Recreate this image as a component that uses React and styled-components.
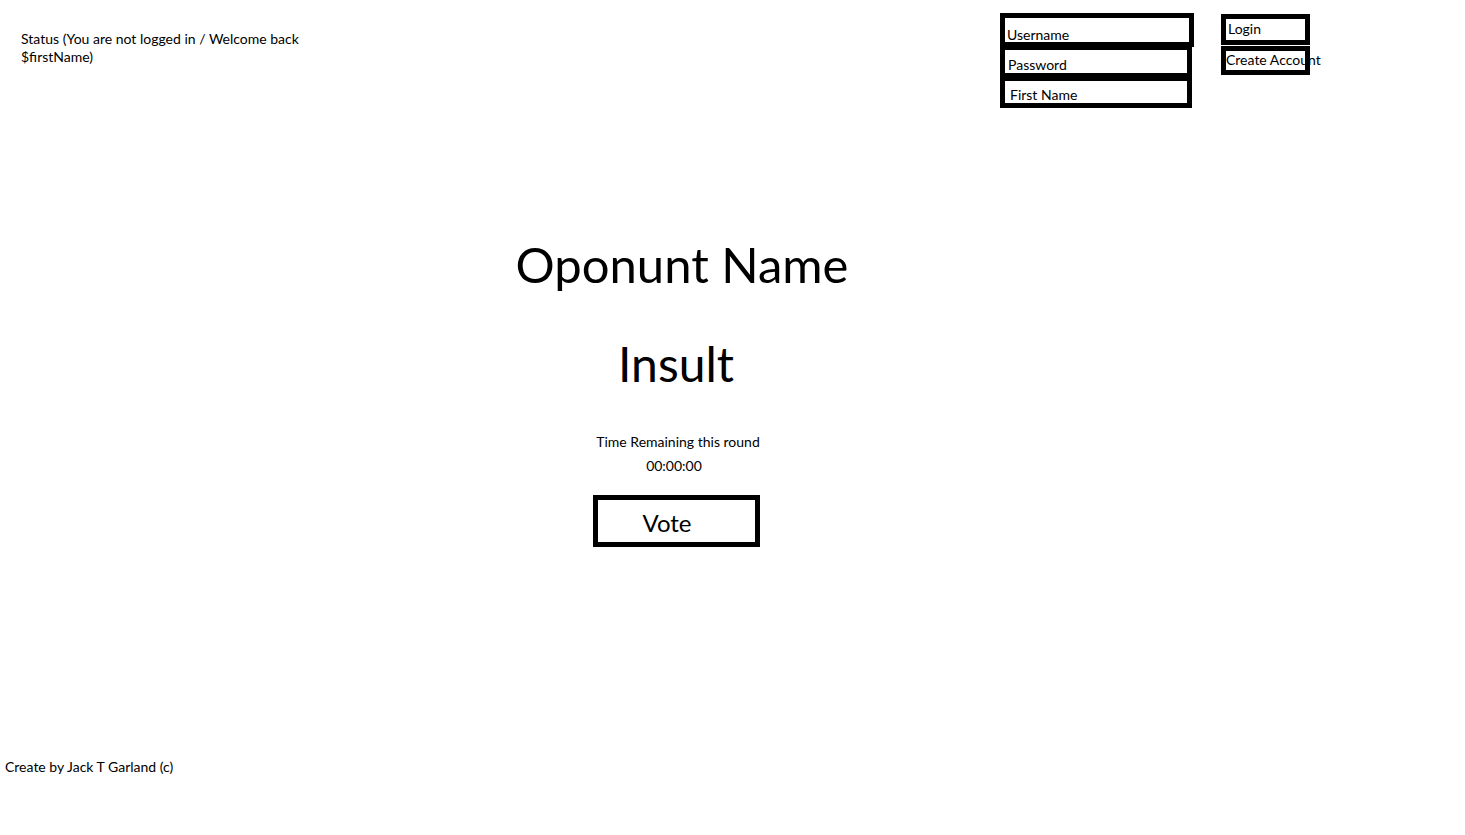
import React from 'react';
import styled, { createGlobalStyle } from 'styled-components';

const GlobalStyle = createGlobalStyle`
  html, body {
    margin: 0;
    padding: 0;
    background: #ffffff;
  }
  body {
    font-family: Lato, "Open Sans", "Liberation Sans", sans-serif;
    color: #000000;
  }
`;

const Page = styled.div`
  width: 1465px;
  height: 835px;
  display: flex;
  flex-direction: column;
  overflow: hidden;
`;

const Header = styled.header`
  display: grid;
  grid-template-columns: 1000px 221px auto;
  padding-top: 13px;
`;

const Status = styled.div`
  padding: 17px 0 0 21px;
  width: 290px;
  font-size: 14px;
  line-height: 18px;
`;

const Fields = styled.div`
  display: flex;
  flex-direction: column;
`;

const Field = styled.div`
  box-sizing: border-box;
  width: ${p => p.$width}px;
  height: ${p => p.$height}px;
  margin-top: ${p => (p.$first ? 0 : -2)}px;
  border: 5px solid #000;
  padding: ${p => p.$pad}px 0 0 ${p => p.$indent}px;
  font-size: 14px;
  line-height: 18px;
  white-space: nowrap;
  overflow: hidden;
`;

const Buttons = styled.div`
  display: flex;
  flex-direction: column;
  padding-top: 1px;
`;

const SmallButton = styled.div`
  position: relative;
  box-sizing: border-box;
  width: 89px;
  height: ${p => p.$height}px;
  margin-top: ${p => (p.$first ? 0 : 1)}px;
  padding: ${p => p.$pad}px 0 0 ${p => p.$indent}px;
  font-size: 14px;
  line-height: 18px;
  white-space: nowrap;

  &::after {
    content: '';
    position: absolute;
    inset: 0;
    border: 5px solid #000;
    pointer-events: none;
  }
`;

const Main = styled.main`
  width: 1352px;
  display: flex;
  flex-direction: column;
  align-items: center;
  padding-top: 127px;
`;

const Title = styled.h1`
  margin: 0;
  font-size: ${p => p.$size}px;
  font-weight: 400;
  line-height: 1.2;
  margin-top: ${p => p.$gap}px;
  transform: translateX(${p => p.$shift}px);
`;

const Caption = styled.div`
  font-size: 14px;
  line-height: 18px;
  margin-top: ${p => p.$gap}px;
  transform: translateX(${p => p.$shift}px);
`;

const VoteButton = styled.button`
  box-sizing: border-box;
  width: 167px;
  height: 52px;
  margin-top: 20px;
  border: 5px solid #000;
  background: #fff;
  font-family: inherit;
  font-size: 24px;
  color: #000;
  padding: 2px 18px 0 0;
  cursor: pointer;
`;

const Footer = styled.footer`
  margin-top: auto;
  padding: 0 0 59px 5px;
  font-size: 14px;
  line-height: 18px;
`;

export default function App() {
  return (
    <Page>
      <GlobalStyle />
      <Header>
        <Status>Status (You are not logged in / Welcome back $firstName)</Status>
        <Fields>
          <Field $first $width={194} $height={34} $pad={8} $indent={2}>Username</Field>
          <Field $width={192} $height={33} $pad={6} $indent={3}>Password</Field>
          <Field $width={192} $height={32} $pad={5} $indent={5}>First Name</Field>
        </Fields>
        <Buttons>
          <SmallButton $first $height={31} $pad={6} $indent={7}>Login</SmallButton>
          <SmallButton $height={29} $pad={5} $indent={5}>Create Account</SmallButton>
        </Buttons>
      </Header>
      <Main>
        <Title $size={49} $gap={0} $shift={6}>Oponunt Name</Title>
        <Title $size={48} $gap={41} $shift={0}>Insult</Title>
        <Caption $gap={41} $shift={2}>Time Remaining this round</Caption>
        <Caption $gap={6} $shift={-2}>00:00:00</Caption>
        <VoteButton>Vote</VoteButton>
      </Main>
      <Footer>Create by Jack T Garland (c)</Footer>
    </Page>
  );
}
